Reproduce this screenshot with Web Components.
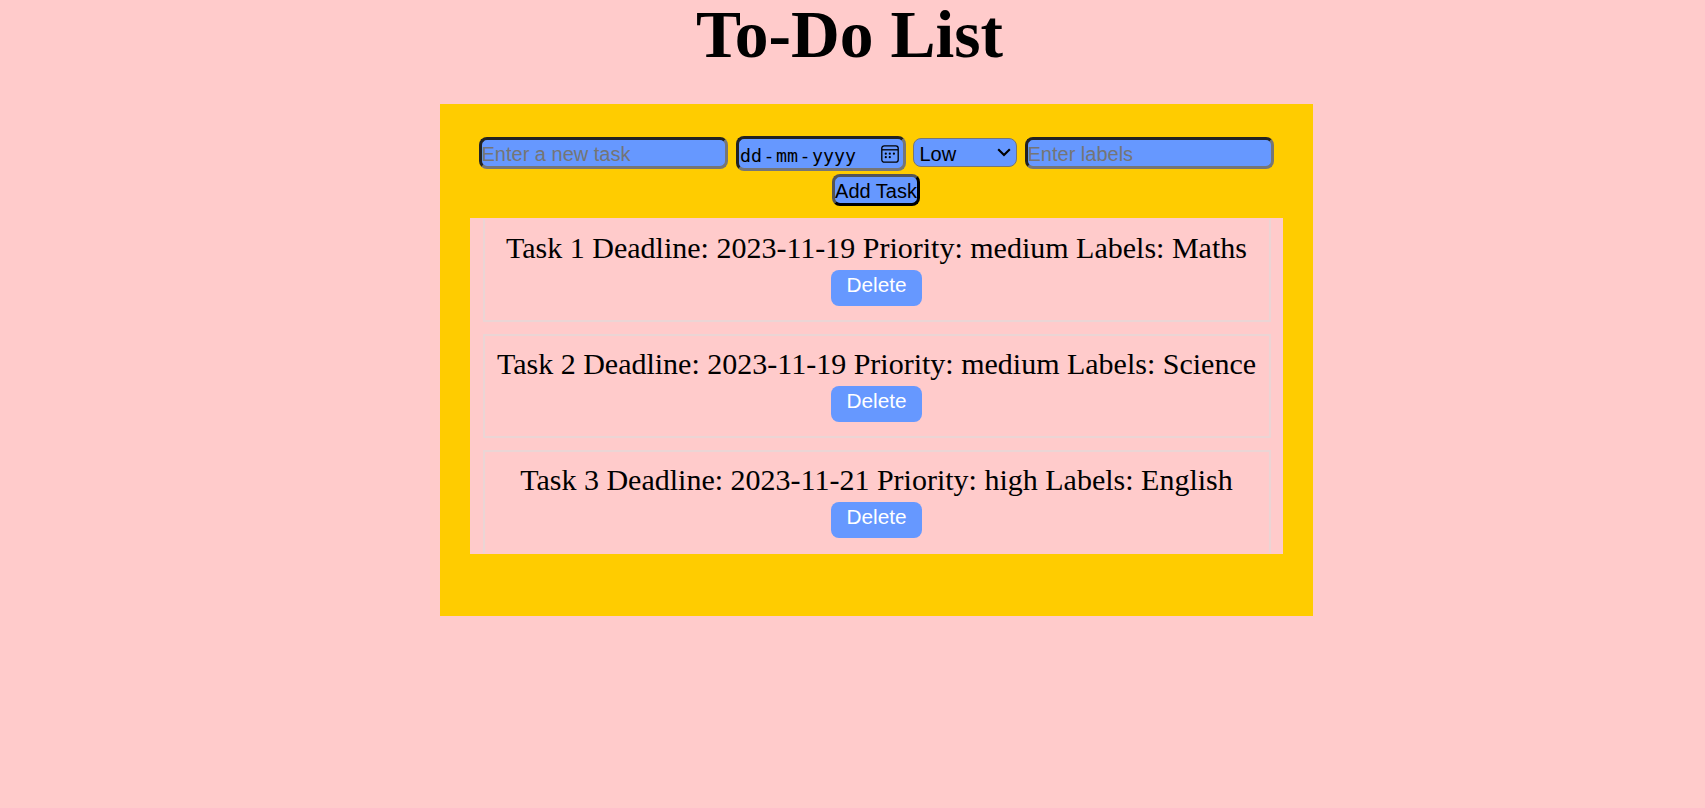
<!DOCTYPE html>
<html lang="en"><head><meta charset="utf-8"><title>To-Do List</title>
<style>html,body{margin:0;height:100%;background:#ffcbcb;overflow:hidden}</style></head>
<body><todo-app></todo-app>
<script>
const define=(name,html)=>customElements.define(name,class extends HTMLElement{
  constructor(){super();const t=document.createElement('template');t.innerHTML=html;
    this.attachShadow({mode:'open'}).append(t.content.cloneNode(true));
    const i=this.shadowRoot.querySelector('input');
    if(i)i.placeholder=this.getAttribute('placeholder')||'';}
});
define('text-field',`<style>:host{display:block;width:249px;height:32px}
input{display:block;box-sizing:border-box;width:100%;height:100%;margin:0;padding:2px 0 0;border:3px solid;border-color:#222 #767676 #767676 #222;border-radius:8px;background:#6698ff;font:20px "Liberation Sans",Arial,sans-serif;outline:0}
input::placeholder{color:#757575;opacity:1}</style><input type="text">`);
define('date-field',`<style>:host{display:flex;align-items:center;box-sizing:border-box;width:170px;height:35px;border:3px solid;border-color:#222 #767676 #767676 #222;border-radius:8px;background:#6698ff;font:18.3px "DejaVu Sans Mono",monospace;color:#000;padding:3px 4px 0 0}
span{padding:0 1.5px}svg{margin:-3px 0 0 auto}</style><span>dd</span>-<span>mm</span>-<span>yyyy</span>
<svg width="18" height="18" viewBox="0 0 18 18"><rect x=".8" y=".8" width="16.4" height="16.4" rx="2.5" fill="none" stroke="#000" stroke-width="1.3"/><path d="M1 4.8h16" stroke="#000" stroke-width="1.3"/><g><circle cx="4.8" cy="8.7" r="1.1"/><circle cx="8.8" cy="8.7" r="1.1"/><circle cx="12.9" cy="8.7" r="1.1"/><circle cx="4.8" cy="12.2" r="1.1"/><circle cx="8.8" cy="12.2" r="1.1"/></g></svg>`);
define('priority-select',`<style>:host{display:flex;align-items:center;justify-content:space-between;box-sizing:border-box;width:104px;height:29px;border:1px solid #767676;border-radius:8px;background:#6698ff;font:20px/27px "Liberation Sans",Arial,sans-serif;color:#000;padding:4px 5px 0 6px}svg{margin-top:-5px}</style><slot></slot>
<svg width="14" height="9" viewBox="0 0 14 9"><path d="M1.2 1.2 7 7l5.8-5.8" fill="none" stroke="#000" stroke-width="2.1"/></svg>`);
define('add-button',`<style>:host{display:block}button{display:block;box-sizing:border-box;width:88px;height:32px;padding:1px 0 0;border:3px solid;border-color:#555 #000 #000 #555;border-radius:8px;background:#6698ff;font:20px/26px "Liberation Sans",Arial,sans-serif;color:#000;white-space:nowrap}</style><button><slot></slot></button>`);
define('task-item',`<style>:host{display:flex;flex-direction:column;align-items:center;box-sizing:border-box;height:104px;border:2px solid #ebd5d5;padding:9px 1px 0 0;font:30px/38px "Liberation Serif","Times New Roman",serif;color:#000;white-space:nowrap}
button{box-sizing:border-box;margin-top:3px;width:91px;height:36px;border:0;border-radius:8px;background:#6698ff;color:#fff;padding:0 0 6px;font:20.8px/30px "Liberation Sans",Arial,sans-serif}</style><slot></slot><button>Delete</button>`);
define('todo-app',`<style>:host{display:block}
h1{margin:0;padding-right:6px;text-align:center;font:bold 67.5px/70px "Liberation Serif","Times New Roman",serif;color:#000}
main{box-sizing:border-box;width:873px;height:512px;margin:34px 0 0 440px;background:#fc0;padding:32px 30px 0}
.row{display:flex;height:38px;justify-content:center;gap:8px;align-items:flex-start}
text-field{margin-top:1px}priority-select{margin:2px 0 0 -1px}
.row{padding-right:1px}
.add{display:flex;justify-content:center;height:44px;padding-right:1px}
.list{display:flex;flex-direction:column;gap:12px;height:336px;overflow:hidden;background:#ffcbcb;box-sizing:border-box;padding:0 12px 0 13px}
task-item{flex:none}task-item:first-child{border-top-color:transparent}task-item:last-child{border-bottom-color:transparent}</style>
<h1>To-Do List</h1><main><div class="row"><text-field placeholder="Enter a new task"></text-field><date-field></date-field><priority-select>Low</priority-select><text-field placeholder="Enter labels"></text-field></div>
<div class="add"><add-button>Add Task</add-button></div>
<div class="list"><task-item>Task 1 Deadline: 2023-11-19 Priority: medium Labels: Maths</task-item><task-item>Task 2 Deadline: 2023-11-19 Priority: medium Labels: Science</task-item><task-item>Task 3 Deadline: 2023-11-21 Priority: high Labels: English</task-item></div></main>`);
</script></body></html>
